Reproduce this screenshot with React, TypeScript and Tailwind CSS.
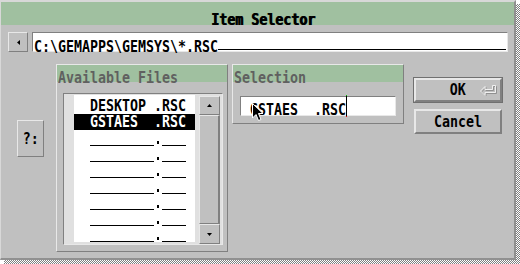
import React from "react";

const raised = "border border-t-[#e8e8e8] border-l-[#e8e8e8] border-r-[#808080] border-b-[#808080]";
const sunken = "border border-t-[#808080] border-l-[#808080] border-r-[#e8e8e8] border-b-[#e8e8e8]";
const checker = "bg-[image:repeating-conic-gradient(#808080_0_25%,#ffffff_0_50%)] bg-[length:2px_2px]";

// Atari-style 8x16 cell: DejaVu Sans Mono squeezed to an 8px advance
function Txt({ children, center, className = "" }: { children: React.ReactNode; center?: boolean; className?: string }) {
  return (
    <span
      className={`${center ? "origin-center" : "origin-left"} inline-block scale-x-[0.831] whitespace-pre font-['DejaVu_Sans_Mono',monospace] text-[16px] leading-[16px] font-bold ${className}`}
    >
      {children}
    </span>
  );
}

function TemplateRow() {
  return (
    <div className="flex h-[16px] items-start pl-[16px]">
      <div className="mt-[15px] h-[1px] w-[64px] bg-black" />
      <div className="ml-[3px] mt-[11px] h-[3px] w-[2px] bg-black" />
      <div className="ml-[3px] mt-[15px] h-[1px] w-[24px] bg-black" />
    </div>
  );
}

function ScrollBar() {
  return (
    <div className="ml-[4px] mt-[2px] flex h-[148px] w-[21px] flex-col bg-[#a8a8a8]">
      <div className={`flex h-[19px] items-center justify-center bg-[#c0c0c0] ${raised}`}>
        <svg width="5" height="3" viewBox="0 0 5 3">
          <path d="M2.5 0 L5 3 H0 Z" fill="#000" />
        </svg>
      </div>
      <div className="flex-1 border-l border-t border-r-2 border-b border-l-[#e8e8e8] border-t-[#e8e8e8] border-r-[#808080] border-b-[#808080] bg-[#c0c0c0]" />
      <div className={`flex h-[20px] items-center justify-center bg-[#c0c0c0] ${raised}`}>
        <svg width="5" height="3" viewBox="0 0 5 3">
          <path d="M0 0 H5 L2.5 3 Z" fill="#000" />
        </svg>
      </div>
    </div>
  );
}

function AvailableFiles() {
  const files = [
    { name: "DESKTOP .RSC", sel: false },
    { name: "GSTAES  .RSC", sel: true },
  ];
  return (
    <div className={`ml-[12px] flex h-[188px] w-[172px] flex-col ${raised}`}>
      <div className="h-[17px] bg-[#a0c0a0] pl-[1px]">
        <Txt className="text-[#606060]">Available Files</Txt>
      </div>
      <div className={`ml-[6px] mt-[11px] flex h-[152px] w-[160px] items-start bg-[#e0e0e0] ${sunken}`}>
        <div className="ml-[10px] mt-[1px] h-[147px] w-[121px] bg-white pt-[3px]">
          {files.map((f) => (
            <div key={f.name} className={`flex h-[16px] items-start pl-[16px] ${f.sel ? "bg-black text-white" : "text-black"}`}>
              <Txt>{f.name}</Txt>
            </div>
          ))}
          {Array.from({ length: 7 }).map((_, i) => (
            <TemplateRow key={i} />
          ))}
        </div>
        <ScrollBar />
      </div>
    </div>
  );
}

function Selection() {
  return (
    <div className={`ml-[4px] flex h-[60px] w-[172px] flex-col ${raised}`}>
      <div className="h-[17px] bg-[#a0c0a0] pl-[1px]">
        <Txt className="text-[#606060]">Selection</Txt>
      </div>
      <div className={`relative ml-[7px] mt-[14px] flex h-[20px] w-[156px] items-start bg-white pl-[9px] ${sunken}`}>
        <div className="w-[96px]">
          <Txt>GSTAES  .RSC</Txt>
        </div>
        <div className="-mt-[2px] flex h-[22px] w-[1px] flex-col bg-black">
          <div className="h-[1px] bg-[#00c000]" />
          <div className="flex-1" />
          <div className="h-[1px] bg-[#e00000]" />
        </div>
        {/* mouse pointer */}
        <svg className="absolute left-[11px] top-[6px]" width="12" height="19" viewBox="0 0 12 19">
          <path d="M0.5 0.5 V15 L4 11.5 L6.5 17.5 L9 16.5 L6.5 10.5 H11 Z" fill="#000" stroke="#fff" strokeWidth="1" />
        </svg>
      </div>
    </div>
  );
}

function Buttons() {
  return (
    <div className="ml-[9px] mt-[13px] flex w-[90px] flex-col">
      <div className="flex h-[26px] border border-[#707070]">
        <div className="relative flex flex-1 items-center justify-center border-2 border-t-[#e8e8e8] border-l-[#e8e8e8] border-r-[#808080] border-b-[#808080] bg-[#c0c0c0]">
          <Txt center className="text-black">OK</Txt>
          <svg className="absolute right-[3px] top-[5px]" width="17" height="11" viewBox="0 0 17 11">
            <path d="M1.5 7 L6 2.5 V5.5 H13.5 V1.5 H16.5 V8.5 H6 V11.5 Z" fill="none" stroke="#909090" strokeWidth="1" />
            <path d="M0.5 6 L5 1.5 V4.5 H12.5 V0.5 H15.5 V7.5 H5 V10.5 Z" fill="none" stroke="#f0f0f0" strokeWidth="1" />
          </svg>
        </div>
      </div>
      <div className="mx-[1px] mt-[6px] flex h-[25px] items-center justify-center border-2 border-t-[#e8e8e8] border-l-[#e8e8e8] border-r-[#808080] border-b-[#808080] bg-[#c0c0c0]">
        <Txt center className="text-black">Cancel</Txt>
      </div>
    </div>
  );
}

function Dialog() {
  return (
    <div className="flex h-[260px] w-[516px] flex-col border-l border-t-2 border-r-2 border-b-2 border-l-[#d8d8d8] border-t-[#d8d8d8] border-r-[#909090] border-b-[#909090] bg-[#c0c0c0]">
      <div className="h-[23px] bg-[#a0c0a0] pl-[210px] pt-[5px]">
        <Txt className="text-black [text-shadow:1px_0_0_#000]">Item Selector</Txt>
      </div>

      <div className="mt-[7px] flex h-[20px] gap-[4px] pl-[7px]">
        <div className={`flex w-[20px] items-center justify-center bg-[#c0c0c0] ${raised}`}>
          <svg width="3" height="5" viewBox="0 0 3 5">
            <path d="M0 2.5 L3 0 V5 Z" fill="#000" />
          </svg>
        </div>
        <div className={`flex w-[476px] items-start bg-white pl-[1px] pt-[1px] ${sunken}`}>
          <div className="w-[184px]">
            <Txt>C:\GEMAPPS\GEMSYS\*.RSC</Txt>
          </div>
          <div className="mt-[15px] h-[1px] w-[288px] bg-black" />
        </div>
      </div>

      <div className="mt-[12px] flex items-start pl-[16px]">
        <div className={`mt-[56px] flex h-[37px] w-[27px] items-center justify-center bg-[#c0c0c0] ${raised}`}>
          <Txt center className="text-black">?:</Txt>
        </div>
        <AvailableFiles />
        <Selection />
        <Buttons />
      </div>
    </div>
  );
}

export default function App() {
  return (
    <div className="flex h-[264px] w-[520px] flex-col bg-white">
      <div className="flex">
        <Dialog />
        <div className="flex w-[4px] flex-col pt-[4px]">
          <div className={`flex-1 ${checker}`} />
        </div>
      </div>
      <div className="flex h-[4px] pl-[4px]">
        <div className={`flex-1 ${checker}`} />
      </div>
    </div>
  );
}
